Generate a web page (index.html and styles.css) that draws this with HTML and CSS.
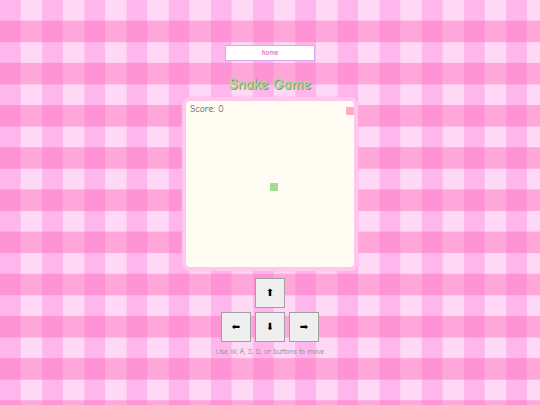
FILE: index.html
```html
<!DOCTYPE html>
<html>
<head>
<meta charset="utf-8">
<title>Snake Game</title>
<link rel="stylesheet" href="styles.css">
</head>
<body>
<div class="page">
  <a class="home" href="#">home</a>
  <h1 class="title">Snake Game</h1>
  <div class="board">
    <div class="score">Score: 0</div>
    <div class="food"></div>
    <div class="snake"></div>
  </div>
  <div class="controls">
    <div class="row"><button class="key">⬆</button></div>
    <div class="row">
      <button class="key">⬅</button>
      <button class="key">⬇</button>
      <button class="key">➡</button>
    </div>
  </div>
  <p class="hint">Use W, A, S, D, or buttons to move</p>
</div>
</body>
</html>
```

FILE: styles.css
```css
html, body {
  margin: 0;
  padding: 0;
}
body {
  width: 540px;
  height: 405px;
  overflow: hidden;
  font-family: "Comic Sans MS", "Comic Neue", cursive;
  background-color: #ffd8f6;
  background-image:
    linear-gradient(180deg, transparent 50%, rgba(255, 100, 180, 0.42) 50%),
    linear-gradient(90deg, rgba(255, 130, 220, 0.4) 50%, transparent 50%);
  background-size: 42.2px 42.2px;
}
.page {
  display: flex;
  flex-direction: column;
  align-items: center;
  padding-top: 45px;
}
.home {
  box-sizing: border-box;
  width: 90px;
  height: 16px;
  background: #fff;
  border: 1px solid #d8a8ee;
  color: #e070b0;
  font-size: 7px;
  font-weight: bold;
  line-height: 14px;
  text-align: center;
  text-decoration: none;
}
.title {
  margin: 14px 0 4px;
  font-size: 15px;
  line-height: 18px;
  color: #a6d996;
  text-shadow: 1px 1px 0 #7f9c76;
  font-weight: bold;
}
.board {
  position: relative;
  box-sizing: border-box;
  width: 176px;
  height: 174px;
  background: #fffdf3;
  border: 4px solid #ffc6ee;
  border-radius: 8px;
  box-shadow: 0 0 3px rgba(255, 170, 225, 0.8);
}
.score {
  position: absolute;
  left: 4px;
  top: 2px;
  font-size: 9.5px;
  color: #555;
}
.food {
  position: absolute;
  left: 160px;
  top: 6px;
  width: 8px;
  height: 8px;
  background: #ffadc6;
}
.snake {
  position: absolute;
  left: 84px;
  top: 82px;
  width: 8px;
  height: 8px;
  background: #a6d996;
}
.controls {
  margin-top: 7px;
  display: flex;
  flex-direction: column;
  align-items: center;
  gap: 4px;
}
.row {
  display: flex;
  gap: 4px;
}
.key {
  box-sizing: border-box;
  width: 30px;
  height: 30px;
  margin: 0;
  padding: 0;
  background: #efefef;
  border: 1px solid #a0a0a0;
  color: #000;
  font-size: 10px;
  font-family: "DejaVu Sans", sans-serif;
  line-height: 28px;
}
.hint {
  margin: 5px 0 0;
  font-size: 7.5px;
  color: #888;
}
```
